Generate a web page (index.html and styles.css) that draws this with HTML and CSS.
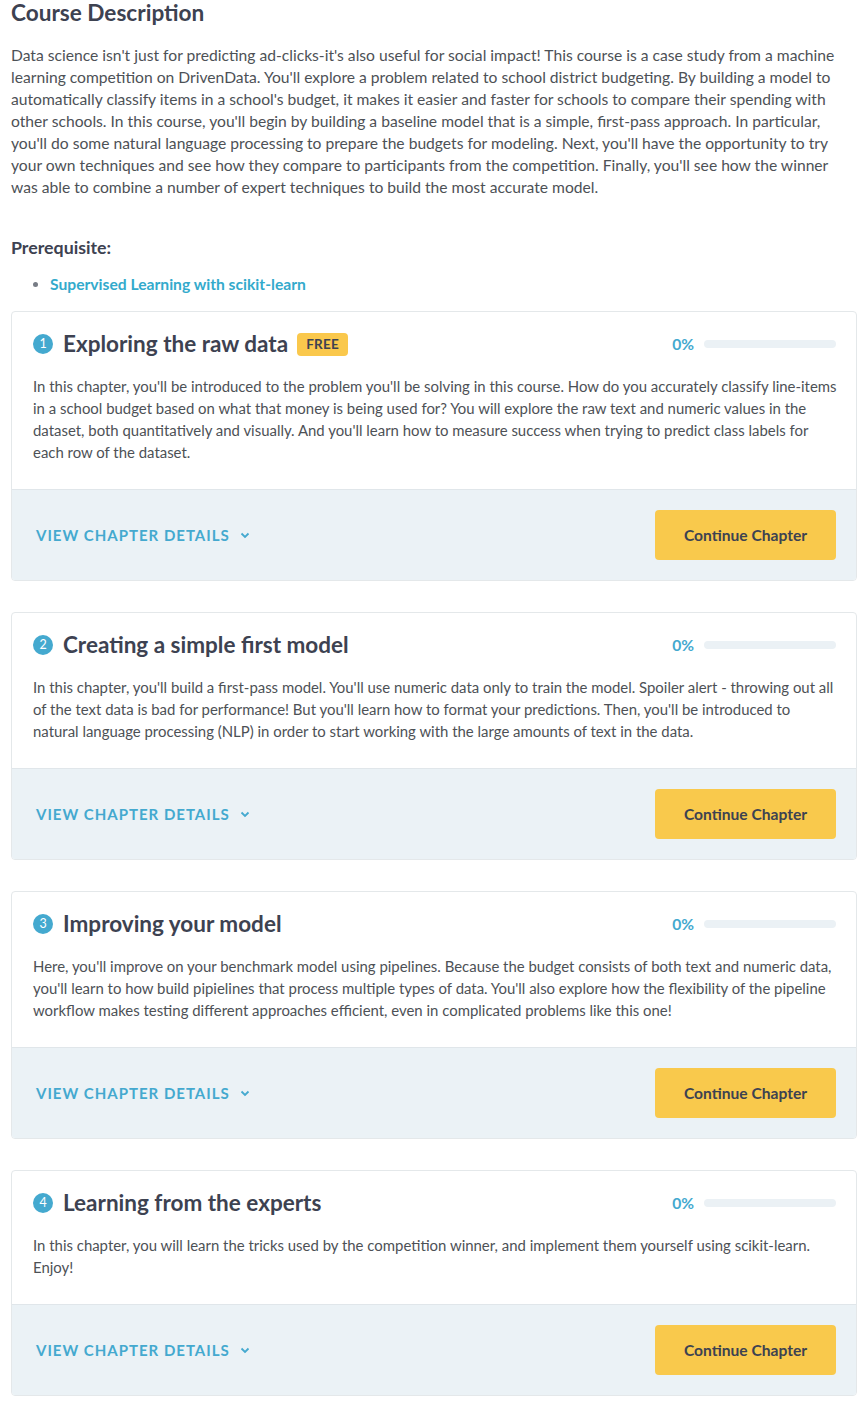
FILE: index.html
```html
<!DOCTYPE html>
<html lang="en">
<head>
<meta charset="utf-8">
<title>Course Description</title>
<link rel="stylesheet" href="styles.css">
</head>
<body>
<main class="page">
  <h2 class="page-title">Course Description</h2>
  <p class="intro">Data science isn't just for predicting ad-clicks-it's also useful for social impact! This course is a case study from a machine learning competition on DrivenData. You'll explore a problem related to school district budgeting. By building a model to automatically classify items in a school's budget, it makes it easier and faster for schools to compare their spending with other schools. In this course, you'll begin by building a baseline model that is a simple, first-pass approach. In particular, you'll do some natural language processing to prepare the budgets for modeling. Next, you'll have the opportunity to try your own techniques and see how they compare to participants from the competition. Finally, you'll see how the winner was able to combine a number of expert techniques to build the most accurate model.</p>

  <h5 class="prereq-title">Prerequisite:</h5>
  <ul class="prereq-list">
    <li><a class="prereq-link" href="#">Supervised Learning with scikit-learn</a></li>
  </ul>

  <section class="chapter">
    <div class="chapter-body">
      <div class="chapter-head">
        <h4 class="chapter-title"><span class="num">1</span>Exploring the raw data<span class="badge">FREE</span></h4>
        <div class="progress"><span class="pct">0%</span><span class="bar"></span></div>
      </div>
      <p class="chapter-desc">In this chapter, you'll be introduced to the problem you'll be solving in this course. How do you accurately classify line-items in a school budget based on what that money is being used for? You will explore the raw text and numeric values in the dataset, both quantitatively and visually. And you'll learn how to measure success when trying to predict class labels for each row of the dataset.</p>
    </div>
    <div class="chapter-foot">
      <a class="details" href="#">View Chapter Details <svg class="chev" width="10" height="7" viewBox="0 0 10 7"><path d="M1.5 1.5 L5 5 L8.5 1.5" fill="none" stroke="currentColor" stroke-width="1.8"/></svg></a>
      <a class="btn" href="#">Continue Chapter</a>
    </div>
  </section>

  <section class="chapter">
    <div class="chapter-body">
      <div class="chapter-head">
        <h4 class="chapter-title"><span class="num">2</span>Creating a simple first model</h4>
        <div class="progress"><span class="pct">0%</span><span class="bar"></span></div>
      </div>
      <p class="chapter-desc">In this chapter, you'll build a first-pass model. You'll use numeric data only to train the model. Spoiler alert - throwing out all of the text data is bad for performance! But you'll learn how to format your predictions. Then, you'll be introduced to natural language processing (NLP) in order to start working with the large amounts of text in the data.</p>
    </div>
    <div class="chapter-foot">
      <a class="details" href="#">View Chapter Details <svg class="chev" width="10" height="7" viewBox="0 0 10 7"><path d="M1.5 1.5 L5 5 L8.5 1.5" fill="none" stroke="currentColor" stroke-width="1.8"/></svg></a>
      <a class="btn" href="#">Continue Chapter</a>
    </div>
  </section>

  <section class="chapter">
    <div class="chapter-body">
      <div class="chapter-head">
        <h4 class="chapter-title"><span class="num">3</span>Improving your model</h4>
        <div class="progress"><span class="pct">0%</span><span class="bar"></span></div>
      </div>
      <p class="chapter-desc">Here, you'll improve on your benchmark model using pipelines. Because the budget consists of both text and numeric data, you'll learn to how build pipielines that process multiple types of data. You'll also explore how the flexibility of the pipeline workflow makes testing different approaches efficient, even in complicated problems like this one!</p>
    </div>
    <div class="chapter-foot">
      <a class="details" href="#">View Chapter Details <svg class="chev" width="10" height="7" viewBox="0 0 10 7"><path d="M1.5 1.5 L5 5 L8.5 1.5" fill="none" stroke="currentColor" stroke-width="1.8"/></svg></a>
      <a class="btn" href="#">Continue Chapter</a>
    </div>
  </section>

  <section class="chapter">
    <div class="chapter-body">
      <div class="chapter-head">
        <h4 class="chapter-title"><span class="num">4</span>Learning from the experts</h4>
        <div class="progress"><span class="pct">0%</span><span class="bar"></span></div>
      </div>
      <p class="chapter-desc">In this chapter, you will learn the tricks used by the competition winner, and implement them yourself using scikit-learn. Enjoy!</p>
    </div>
    <div class="chapter-foot">
      <a class="details" href="#">View Chapter Details <svg class="chev" width="10" height="7" viewBox="0 0 10 7"><path d="M1.5 1.5 L5 5 L8.5 1.5" fill="none" stroke="currentColor" stroke-width="1.8"/></svg></a>
      <a class="btn" href="#">Continue Chapter</a>
    </div>
  </section>
</main>
</body>
</html>
```

FILE: styles.css
```css
* { box-sizing: border-box; }

html, body {
  margin: 0;
  padding: 0;
  background: #ffffff;
}

body {
  font-family: Lato, "Open Sans", "Liberation Sans", sans-serif;
  color: #3d4251;
}

.page {
  padding: 0 10px 0 11px;
}

.page-title {
  margin: 0;
  font-size: 22.6px;
  line-height: 26px;
  font-weight: 700;
  color: #3d4251;
}

.intro {
  margin: 18px 0 0;
  font-size: 15.65px;
  line-height: 22px;
  color: #4d5156;
}

.prereq-title {
  margin: 38px 0 0;
  font-size: 17.8px;
  line-height: 22px;
  font-weight: 700;
  color: #3d4251;
}

.prereq-list {
  margin: 15px 0 0;
  padding-left: 39px;
  font-size: 15.65px;
  line-height: 22px;
  color: #777c85;
}

.prereq-link {
  color: #33aacc;
  font-weight: 700;
  text-decoration: none;
}

.chapter {
  margin-top: 16px;
  border: 1px solid #e4e8ea;
  border-radius: 4px;
  overflow: hidden;
  background: #fff;
}

.chapter + .chapter {
  margin-top: 31px;
}

.chapter-body {
  padding: 17px 20px 26px 21px;
}

.chapter-head {
  display: flex;
  align-items: center;
  justify-content: space-between;
  height: 30px;
}

.chapter-title {
  margin: 0;
  display: flex;
  align-items: center;
  font-size: 22.5px;
  line-height: 30px;
  font-weight: 700;
  color: #3d4251;
}

.num {
  display: inline-flex;
  align-items: center;
  justify-content: center;
  width: 20px;
  height: 20px;
  margin-right: 10px;
  border-radius: 50%;
  background: #44a9cf;
  color: #fff;
  font-size: 12.5px;
  font-weight: 400;
  line-height: 1;
}

.badge {
  display: inline-block;
  margin-left: 9px;
  padding: 0 9px;
  height: 23px;
  line-height: 23px;
  border-radius: 4px;
  background: #fac84c;
  color: #3d4251;
  font-size: 13.5px;
  font-weight: 700;
  letter-spacing: 0.3px;
}

.progress {
  display: flex;
  align-items: center;
  gap: 10px;
}

.pct {
  font-size: 15.6px;
  font-weight: 700;
  color: #44a9cf;
}

.bar {
  display: block;
  width: 132px;
  height: 8px;
  border-radius: 4px;
  background: #ebf1f5;
}

.chapter-desc {
  margin: 16px -3px 0 0;
  font-size: 14.93px;
  line-height: 22px;
  color: #4d5156;
}

.chapter-foot {
  display: flex;
  align-items: center;
  justify-content: space-between;
  padding: 20px 20px 20px 24px;
  background: #ebf2f6;
  border-top: 1px solid #e0e6ea;
}

.details {
  display: inline-flex;
  align-items: center;
  gap: 8px;
  color: #44a9cf;
  text-decoration: none;
  text-transform: uppercase;
  font-size: 15px;
  font-weight: 700;
  letter-spacing: 1px;
}

.chev {
  margin-left: 2px;
}

.btn {
  display: inline-flex;
  align-items: center;
  justify-content: center;
  width: 181px;
  height: 50px;
  border-radius: 4px;
  background: #f9c94c;
  color: #3d4251;
  text-decoration: none;
  font-size: 15.6px;
  font-weight: 700;
}
```
